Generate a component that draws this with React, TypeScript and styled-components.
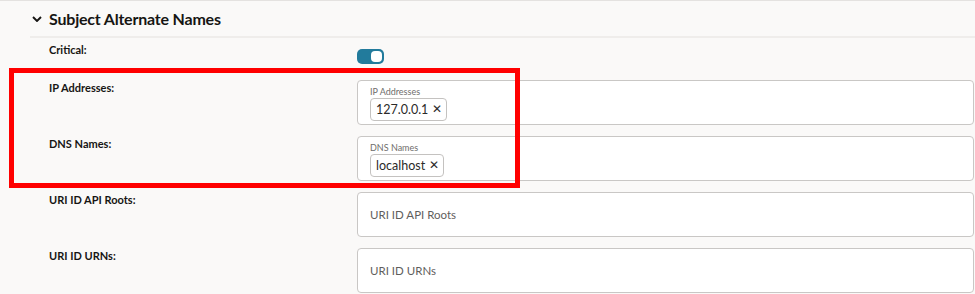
import React from "react";
import styled, { createGlobalStyle } from "styled-components";

const GlobalStyle = createGlobalStyle`
    body {
        margin: 0;
        background: #faf9f8;
        font-family: Lato, "Noto Sans", sans-serif;
        color: #161513;
    }
`;

const Page = styled.div`
    position: relative;
    width: 975px;
    height: 294px;
    overflow: hidden;
    border-top: 1px solid #e4e2e0;
    box-sizing: border-box;
`;

const SectionHeader = styled.div`
    display: flex;
    align-items: center;
    gap: 7px;
    height: 35px;
    margin-left: 30px;
    padding-left: 2px;
    border-bottom: 2px solid #efedeb;
    font-size: 16px;
    font-weight: 700;
    letter-spacing: -0.2px;
`;

const Chevron = styled.svg`
    width: 10px;
    height: 6px;
    margin-top: 1px;
`;

const Form = styled.div`
    padding: 4px 1px 0 49px;
`;

const Row = styled.div<{ $gap?: number }>`
    display: grid;
    grid-template-columns: 308px 1fr;
    margin-bottom: ${(p) => p.$gap ?? 11}px;
`;

const Label = styled.div`
    font-size: 11px;
    font-weight: 700;
    line-height: 16px;
`;

const Toggle = styled.div<{ $on: boolean }>`
    position: relative;
    width: 27px;
    height: 15px;
    margin-top: 7px;
    border-radius: 5px;
    background: ${(p) => (p.$on ? "#227b9c" : "#8d8b89")};
    box-sizing: border-box;

    &::after {
        content: "";
        position: absolute;
        top: 2px;
        ${(p) => (p.$on ? "right: 2px;" : "left: 2px;")}
        width: 11px;
        height: 11px;
        border-radius: 4px;
        background: #fff;
    }
`;

const Field = styled.div`
    height: 45px;
    box-sizing: border-box;
    background: #fff;
    border: 1px solid #c9c7c5;
    border-radius: 4px;
    padding: 0 12px;
    display: flex;
    flex-direction: column;
    justify-content: center;
`;

const FieldLabel = styled.div`
    font-size: 9px;
    line-height: 11px;
    color: #6f6e6c;
    margin-top: 1px;
`;

const Chips = styled.div`
    display: flex;
    gap: 4px;
    margin-top: 1px;
`;

const Chip = styled.div`
    display: flex;
    align-items: center;
    gap: 4px;
    height: 23px;
    box-sizing: border-box;
    padding: 0 4px 0 5px;
    border: 1px solid #c4c2c0;
    border-radius: 4px;
    font-size: 12.5px;
    color: #2b2a29;
`;

const Remove = styled.span`
    font-size: 12px;
    line-height: 1;
`;

const Placeholder = styled.div`
    font-size: 11.5px;
    color: #5f5e5c;
`;

const Highlight = styled.div`
    position: absolute;
    left: 9px;
    top: 67px;
    width: 511px;
    height: 120px;
    box-sizing: border-box;
    border: 5px solid #ff0000;
    pointer-events: none;
`;

type TagField = { label: string; values: string[] };

const tagFields: TagField[] = [
    { label: "IP Addresses", values: ["127.0.0.1"] },
    { label: "DNS Names", values: ["localhost"] },
];

const emptyFields = ["URI ID API Roots", "URI ID URNs"];

export default function App() {
    return (
        <Page>
            <GlobalStyle />
            <SectionHeader>
                <Chevron viewBox="0 0 10 6">
                    <path d="M1 1 L5 5 L9 1" fill="none" stroke="#161513" strokeWidth="1.9" />
                </Chevron>
                Subject Alternate Names
            </SectionHeader>
            <Form>
                <Row $gap={16}>
                    <Label>Critical:</Label>
                    <div>
                        <Toggle $on={true} />
                    </div>
                </Row>
                {tagFields.map((f) => (
                    <Row key={f.label}>
                        <Label>{f.label}:</Label>
                        <Field>
                            <FieldLabel>{f.label}</FieldLabel>
                            <Chips>
                                {f.values.map((v) => (
                                    <Chip key={v}>
                                        {v}
                                        <Remove>✕</Remove>
                                    </Chip>
                                ))}
                            </Chips>
                        </Field>
                    </Row>
                ))}
                {emptyFields.map((name) => (
                    <Row key={name}>
                        <Label>{name}:</Label>
                        <Field>
                            <Placeholder>{name}</Placeholder>
                        </Field>
                    </Row>
                ))}
            </Form>
            <Highlight />
        </Page>
    );
}
